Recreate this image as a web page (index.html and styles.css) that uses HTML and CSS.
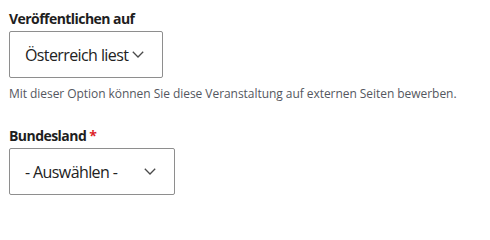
FILE: index.html
```html
<!DOCTYPE html>
<html lang="de">
<head>
<meta charset="utf-8">
<title>Formular</title>
<link rel="stylesheet" href="styles.css">
</head>
<body>
<form class="form">
  <div class="field">
    <label class="label">Veröffentlichen auf</label>
    <div class="select select-publish">
      <span class="select-value">Österreich liest</span>
      <svg class="chevron" width="12" height="7" viewBox="0 0 12 7" aria-hidden="true"><polyline points="0.8,0.8 6,6 11.2,0.8" fill="none" stroke="#4a4a4a" stroke-width="1.3"/></svg>
    </div>
    <p class="help">Mit dieser Option können Sie diese Veranstaltung auf externen Seiten bewerben.</p>
  </div>
  <div class="field field-state">
    <label class="label">Bundesland<span class="required">*</span></label>
    <div class="select select-state">
      <span class="select-value">- Auswählen -</span>
      <svg class="chevron" width="12" height="7" viewBox="0 0 12 7" aria-hidden="true"><polyline points="0.8,0.8 6,6 11.2,0.8" fill="none" stroke="#4a4a4a" stroke-width="1.3"/></svg>
    </div>
  </div>
</form>
</body>
</html>
```
FILE: styles.css
```css
html, body {
  margin: 0;
  padding: 0;
  background: #ffffff;
}
body {
  font-family: "Open Sans", "Noto Sans", sans-serif;
  color: #222222;
}
.form {
  padding: 8px 0 0 9px;
  display: flex;
  flex-direction: column;
}
.field {
  display: flex;
  flex-direction: column;
  align-items: flex-start;
}
.field-state {
  margin-top: 22px;
}
.label {
  font-size: 14px;
  font-weight: 700;
  line-height: 21px;
  letter-spacing: -0.55px;
  color: #1e1e1e;
}
.required {
  color: #dc1f2a;
  margin-left: 3px;
}
.select {
  box-sizing: border-box;
  height: 47px;
  margin-top: 2px;
  border: 1px solid #8e8e8e;
  border-radius: 2px;
  display: flex;
  align-items: center;
  padding: 0 18px 0 15px;
  background: #ffffff;
}
.select-publish {
  width: 154px;
}
.select-state {
  width: 166px;
}
.select-value {
  font-size: 16px;
  line-height: 22px;
  letter-spacing: -0.6px;
  color: #222222;
  white-space: nowrap;
}
.chevron {
  margin-left: auto;
  flex: none;
  display: block;
}
.help {
  margin: 7px 0 0 0;
  font-size: 12px;
  line-height: 18px;
  letter-spacing: -0.05px;
  color: #545760;
}
```
